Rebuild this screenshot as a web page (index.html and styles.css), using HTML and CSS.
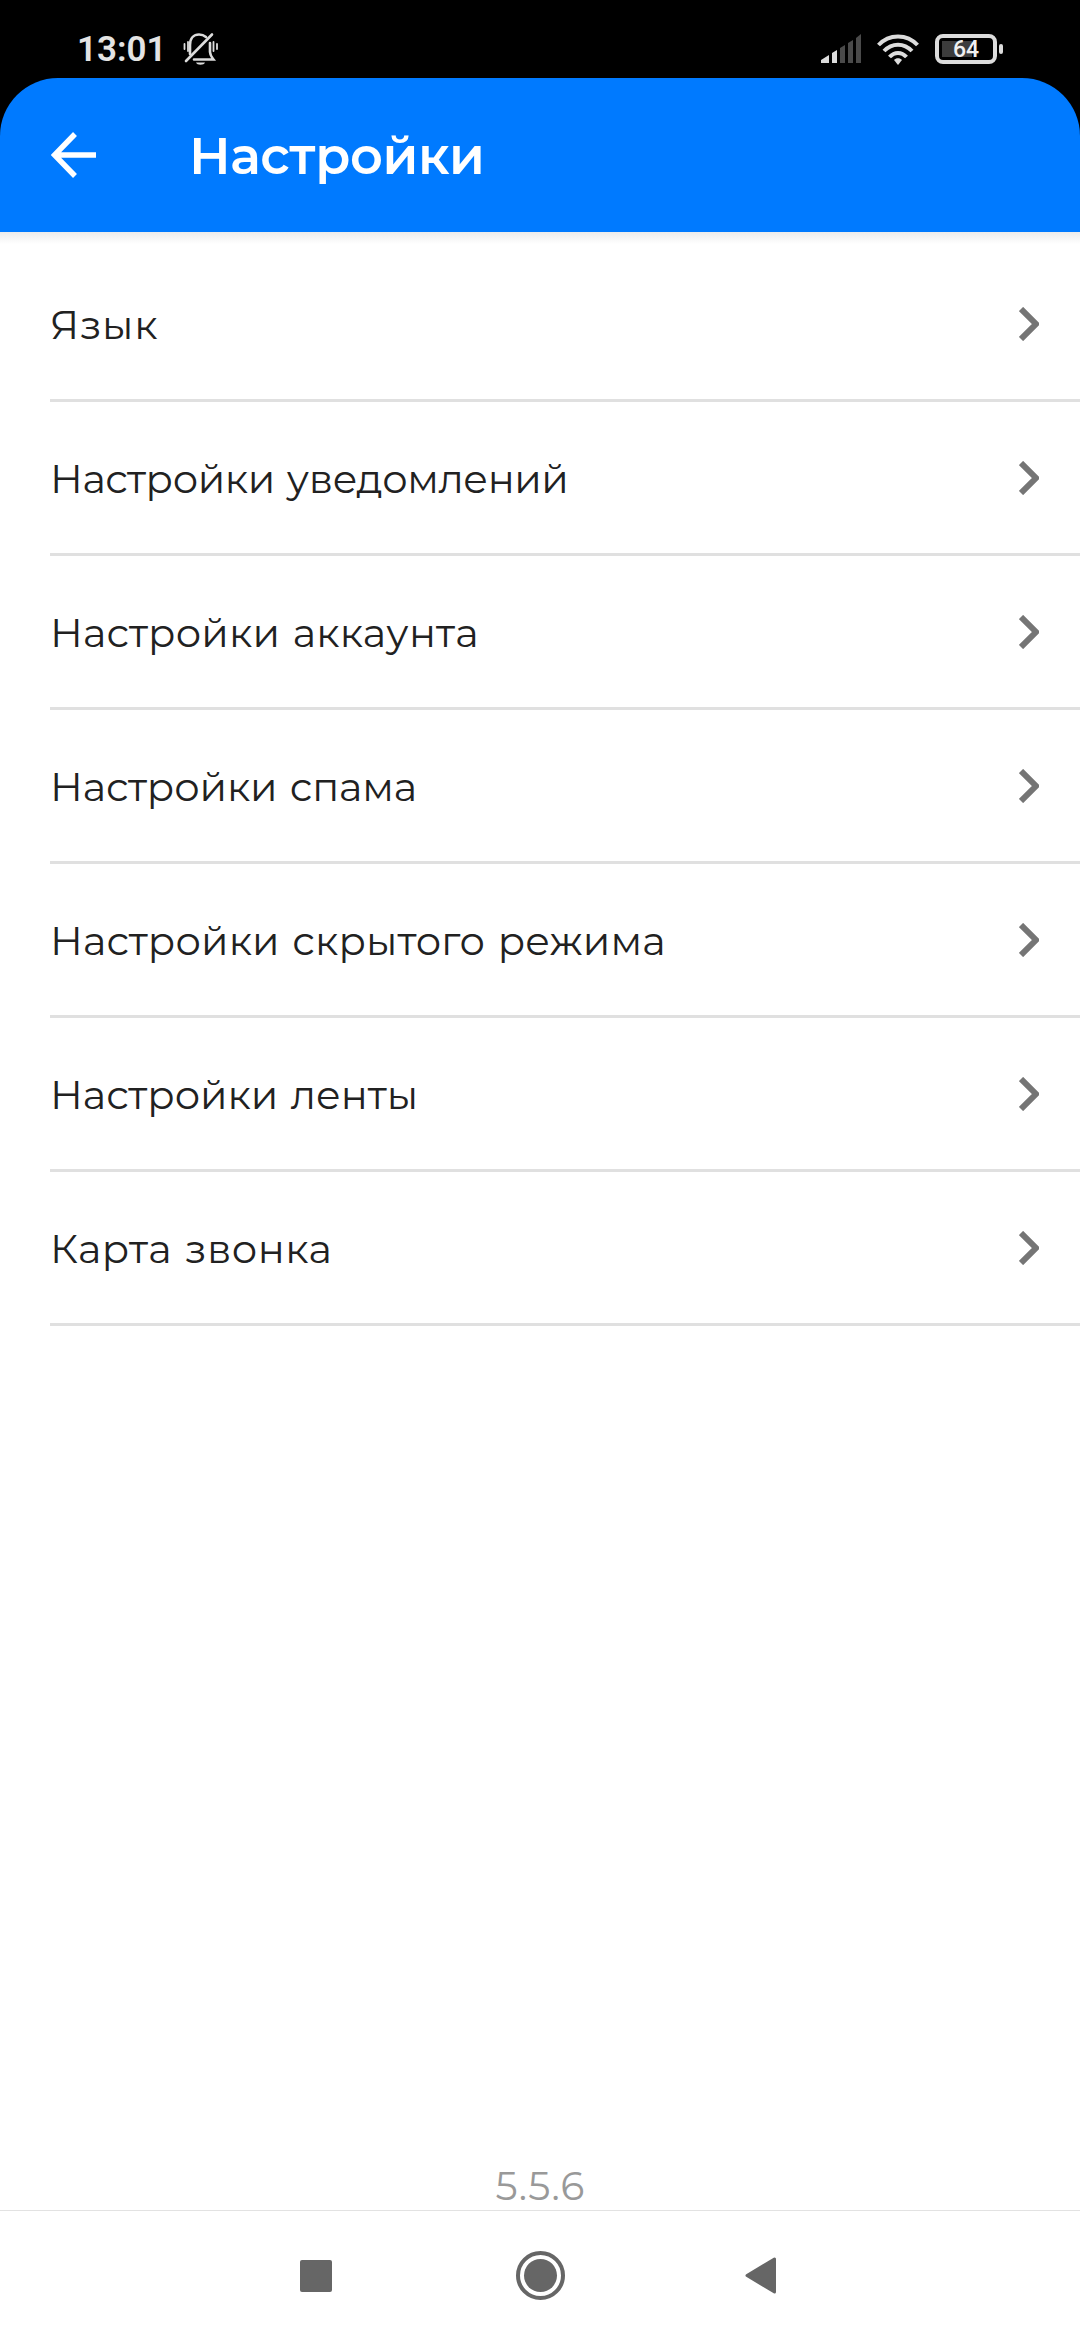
FILE: index.html
```
<!DOCTYPE html>
<html lang="ru">
<head>
    <meta charset="UTF-8">
    <meta name="viewport" content="width=device-width, initial-scale=1.0">
    <title>Настройки</title>
    <link rel="stylesheet" href="styles.css">
</head>
<body>
    <div class="status-bar">
        <span class="time">13:01</span>
        <svg class="bell" width="36" height="34" viewBox="0 0 36 34" fill="none" stroke="#dcdcdc" stroke-width="2.6" stroke-linecap="round">
            <path d="M7 22V13C7 6 11 2.5 16 2.5c3 0 5 .8 7 2.5M27 11v9c0 3 1 4 3.500 7.500H11"/>
            <path d="M3 29L29 2.500"/>
            <path d="M1.500 12v5M5 10v9M30.500 10v9M34 12v5" stroke-width="1.800"/>
            <path d="M13 30.500h9c-1 3-8 3-9 0z" fill="#dcdcdc" stroke="none"/>
        </svg>
        <div class="status-icons">
            <svg width="40" height="30" viewBox="0 0 40 30">
                <path d="M0 29v-3l8-5v8zM11 29V19l5-3v13z" fill="#dcdcdc"/>
                <path d="M19 29V14l5-3v18zM27 29V9l5-3v23zM35 29V4l5-4v29z" fill="#4a4a4a"/>
            </svg>
            <svg class="wifi" width="42" height="31" viewBox="0 0 42 31" fill="none" stroke="#dcdcdc" stroke-width="4">
                <path d="M1.500 11C12-.500 30-.500 40.500 11M7 17c8-8.500 20-8.500 28 0M12.500 23c5-5.500 12-5.500 17 0"/>
                <path d="M17 26c2-2.500 6-2.500 8 0l-4 5z" fill="#dcdcdc" stroke="none"/>
            </svg>
            <div class="battery"><span>64</span></div>
            <div class="battery-tip"></div>
        </div>
    </div>

    <header class="header">
        <svg class="back" width="46" height="46" viewBox="0 0 46 46" fill="none" stroke="#fff" stroke-width="5.500">
            <path d="M24 2L3.500 23 24 44M4 23h41"/>
        </svg>
        <h1>Настройки</h1>
    </header>

    <main class="content">
        <ul class="settings">
            <li class="language"><span>Язык</span><svg class="chevron" viewBox="0 0 20 34"><path d="M2 2l15 15L2 32"/></svg></li>
            <li class="notifications"><span>Настройки уведомлений</span><svg class="chevron" viewBox="0 0 20 34"><path d="M2 2l15 15L2 32"/></svg></li>
            <li class="account"><span>Настройки аккаунта</span><svg class="chevron" viewBox="0 0 20 34"><path d="M2 2l15 15L2 32"/></svg></li>
            <li class="spam"><span>Настройки спама</span><svg class="chevron" viewBox="0 0 20 34"><path d="M2 2l15 15L2 32"/></svg></li>
            <li class="hidden-mode"><span>Настройки скрытого режима</span><svg class="chevron" viewBox="0 0 20 34"><path d="M2 2l15 15L2 32"/></svg></li>
            <li class="feed"><span>Настройки ленты</span><svg class="chevron" viewBox="0 0 20 34"><path d="M2 2l15 15L2 32"/></svg></li>
            <li class="call-card"><span>Карта звонка</span><svg class="chevron" viewBox="0 0 20 34"><path d="M2 2l15 15L2 32"/></svg></li>
        </ul>
        <div class="version">5.5.6</div>
    </main>

    <nav class="nav-bar">
        <svg width="32" height="32" viewBox="0 0 32 32"><rect width="32" height="32" rx="2" fill="#666"/></svg>
        <svg class="home" width="49" height="49" viewBox="0 0 49 49">
            <circle cx="24.500" cy="24.500" r="22.500" fill="none" stroke="#666" stroke-width="4"/>
            <circle cx="24.500" cy="24.500" r="16.500" fill="#666"/>
        </svg>
        <svg width="32" height="37" viewBox="0 0 32 37"><path d="M2 18.500L29.500 2v33z" fill="#666" stroke="#666" stroke-width="3" stroke-linejoin="round"/></svg>
    </nav>
</body>
</html>
```
FILE: styles.css
```
* {
    box-sizing: border-box;
}
body {
    display: flex;
    flex-direction: column;
    height: 2340px;
    margin: 0;
    background-color: #000;
    font-family: Montserrat, Inter, sans-serif;
}
svg {
    display: block;
    flex-shrink: 0;
}
.status-bar {
    display: flex;
    align-items: center;
    height: 78px;
    padding: 20px 77px 0 77px;
    color: #e4e4e4;
    font-family: Roboto, sans-serif;
}
.time {
    width: 106px;
    font-size: 35px;
    font-weight: 600;
}
.status-icons {
    display: flex;
    align-items: center;
    margin-left: auto;
}
.wifi {
    margin: 0 16px;
}
.battery {
    width: 62px;
    height: 30px;
    border: 4px solid #dcdcdc;
    border-radius: 8px;
    background: linear-gradient(#3c3c3c, #3c3c3c) 3px 3px / 30px 16px no-repeat;
    color: #f0f0f0;
    font-size: 23px;
    font-weight: 500;
    line-height: 24px;
    text-align: center;
}
.battery-tip {
    width: 4px;
    height: 10px;
    margin-left: 2px;
    border-radius: 2px;
    background-color: #dcdcdc;
}
.header {
    display: flex;
    align-items: center;
    height: 154px;
    padding-left: 51px;
    border-radius: 58px 58px 0 0;
    background-color: #007aff;
    color: #fff;
}
.header h1 {
    margin: 2px 0 0 92px;
    font-size: 51px;
    font-weight: 600;
    line-height: 60px;
    letter-spacing: -0.4px;
}
.content {
    display: flex;
    flex: 1;
    flex-direction: column;
    background: linear-gradient(#ececec, #fff 12px);
}
.settings {
    margin: 0;
    padding: 16px 0 0 50px;
    list-style: none;
}
.settings li {
    display: flex;
    align-items: center;
    justify-content: space-between;
    height: 154px;
    padding-right: 41px;
    border-bottom: 3px solid #e0e0e0;
    color: #212121;
    font-size: 40px;
    font-weight: 400;
    word-spacing: 2px;
}
.settings span {
    margin-top: 1px;
}
.settings .language {
    letter-spacing: 0.7px;
}
.settings .notifications {
    letter-spacing: -0.4px;
}
.settings .account {
    letter-spacing: 0.2px;
}
.settings .spam {
    letter-spacing: -0.1px;
}
.settings .hidden-mode {
    letter-spacing: 0.15px;
}
.settings .call-card {
    letter-spacing: 0.5px;
}
.chevron {
    width: 20px;
    height: 34px;
    fill: none;
    stroke: #757575;
    stroke-width: 6;
}
.version {
    margin-top: auto;
    padding-left: 1px;
    color: #999;
    font-size: 39px;
    font-weight: 400;
    line-height: 48px;
    text-align: center;
    letter-spacing: 1.2px;
}
.nav-bar {
    display: flex;
    align-items: center;
    justify-content: space-between;
    height: 130px;
    padding: 0 303px 0 300px;
    border-top: 1px solid #e2e2e2;
    background-color: #fff;
}
.home {
    margin-left: 4px;
}
```
